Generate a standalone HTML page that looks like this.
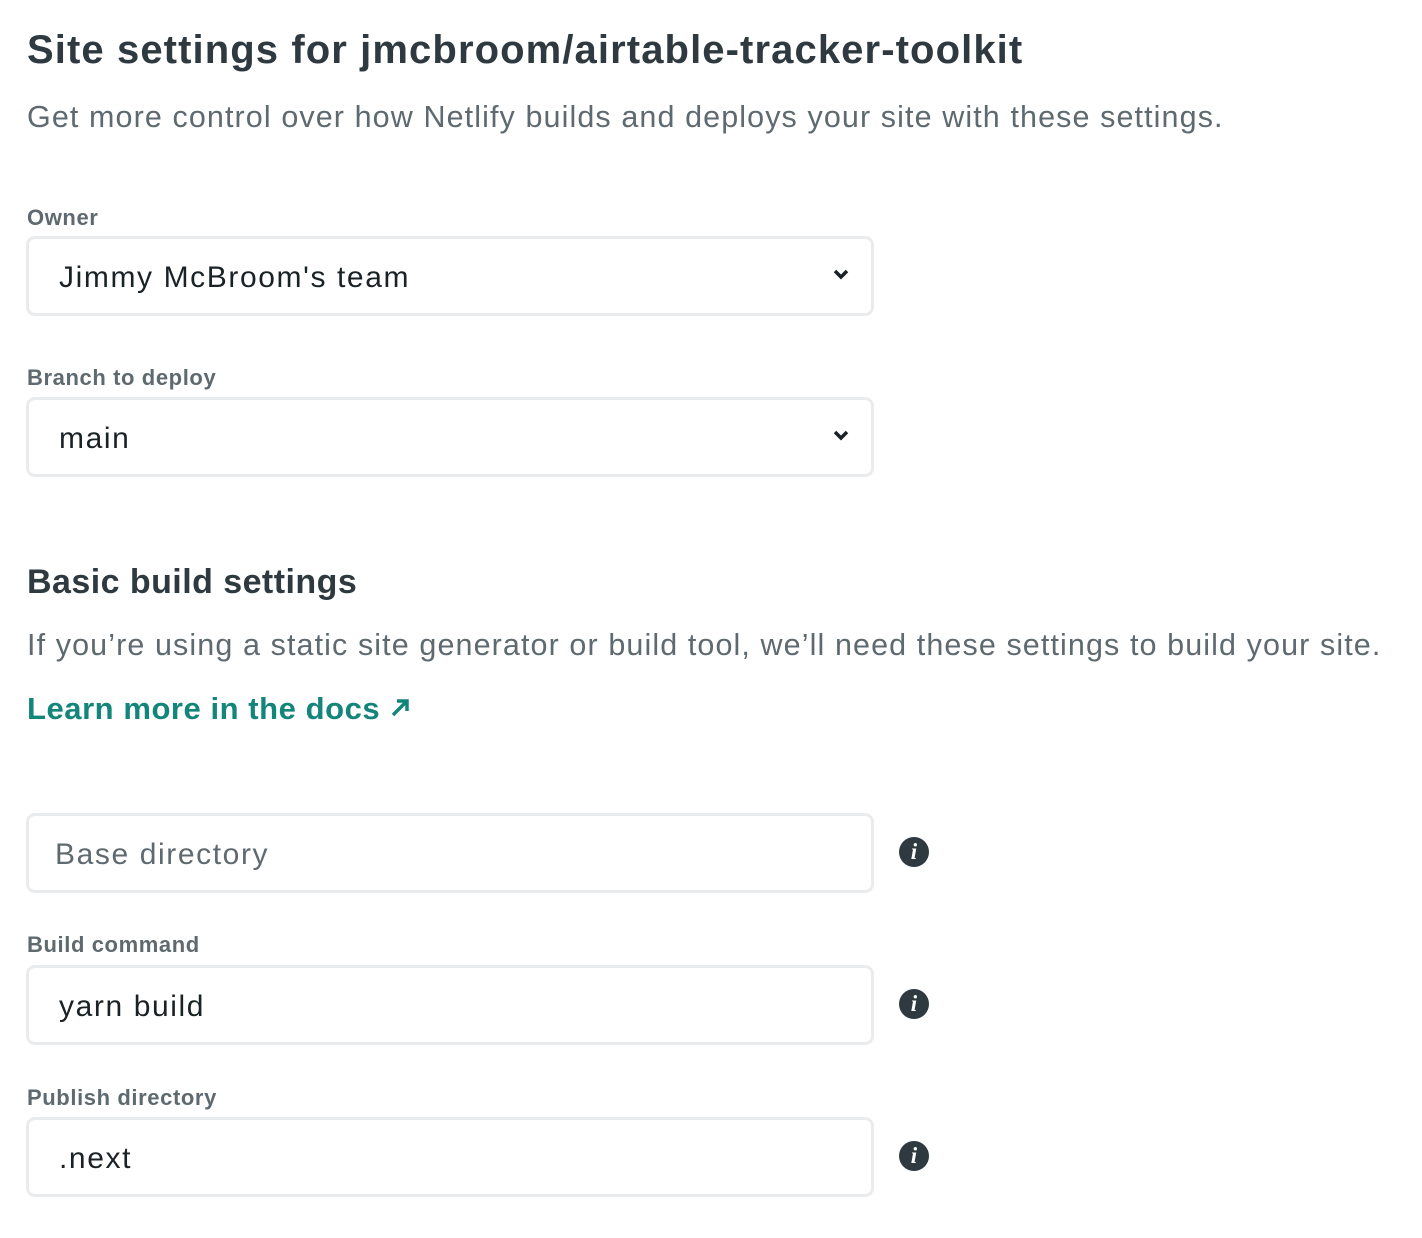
<!DOCTYPE html>
<html><head><meta charset="utf-8"><style>
body{margin:0;background:#fff;font-family:"Liberation Sans",sans-serif;color:#2e3a40;width:1422px;height:1238px;position:relative;overflow:hidden}
.a{position:absolute;white-space:nowrap}
h1{position:absolute;left:27px;top:25px;margin:0;font-size:40px;font-weight:bold;line-height:50px;letter-spacing:1.1px}
.sub{color:#5e6a70;font-size:30.5px;line-height:40px;letter-spacing:1.1px}
.lab{color:#5e6a70;font-size:22px;font-weight:bold;line-height:28px;letter-spacing:0.6px}
.box{position:absolute;left:26px;width:842px;height:74px;border:3px solid #e9ebed;border-radius:9px;background:#fff}
.box span{position:absolute;left:30px;top:21px;font-size:30px;line-height:36px;color:#1a2226;letter-spacing:1.6px}
.chev{position:absolute;right:21px;top:28px}
.info{position:absolute;left:899px;width:30px;height:30px;border-radius:50%;background:#2e3a40;color:#fff;font:italic bold 23px/30px "Liberation Serif",serif;text-align:center}
</style></head><body>
<h1>Site settings for jmcbroom/airtable-tracker-toolkit</h1>
<div class="a sub" style="left:27px;top:97px">Get more control over how Netlify builds and deploys your site with these settings.</div>
<div class="a lab" style="left:27px;top:204px">Owner</div>
<div class="box" style="top:236px"><span>Jimmy McBroom's team</span><svg class="chev" width="18" height="14" viewBox="0 0 18 14"><path d="M3 4l6 6 6-6" stroke="#1a2226" stroke-width="3.5" fill="none"/></svg></div>
<div class="a lab" style="left:27px;top:364px">Branch to deploy</div>
<div class="box" style="top:397px"><span>main</span><svg class="chev" width="18" height="14" viewBox="0 0 18 14"><path d="M3 4l6 6 6-6" stroke="#1a2226" stroke-width="3.5" fill="none"/></svg></div>
<div class="a" style="left:27px;top:561px;font-size:34px;font-weight:bold;line-height:42px;letter-spacing:0.45px">Basic build settings</div>
<div class="a sub" style="left:27px;top:625px">If you’re using a static site generator or build tool, we’ll need these settings to build your site.</div>
<div class="a" style="left:27px;top:690px;font-size:31px;font-weight:bold;color:#14857a;line-height:38px;letter-spacing:0.55px">Learn more in the docs <svg width="22" height="22" viewBox="0 0 22 22" style="vertical-align:0px"><path d="M4 18L17 5M8 4h10v10" stroke="#14857a" stroke-width="3.5" fill="none"/></svg></div>
<div class="box" style="top:813px"><span style="left:26px;color:#5e6a70">Base directory</span></div>
<div class="info" style="top:837px">i</div>
<div class="a lab" style="left:27px;top:931px">Build command</div>
<div class="box" style="top:965px"><span>yarn build</span></div>
<div class="info" style="top:989px">i</div>
<div class="a lab" style="left:27px;top:1084px">Publish directory</div>
<div class="box" style="top:1117px"><span>.next</span></div>
<div class="info" style="top:1141px">i</div>
</body></html>
